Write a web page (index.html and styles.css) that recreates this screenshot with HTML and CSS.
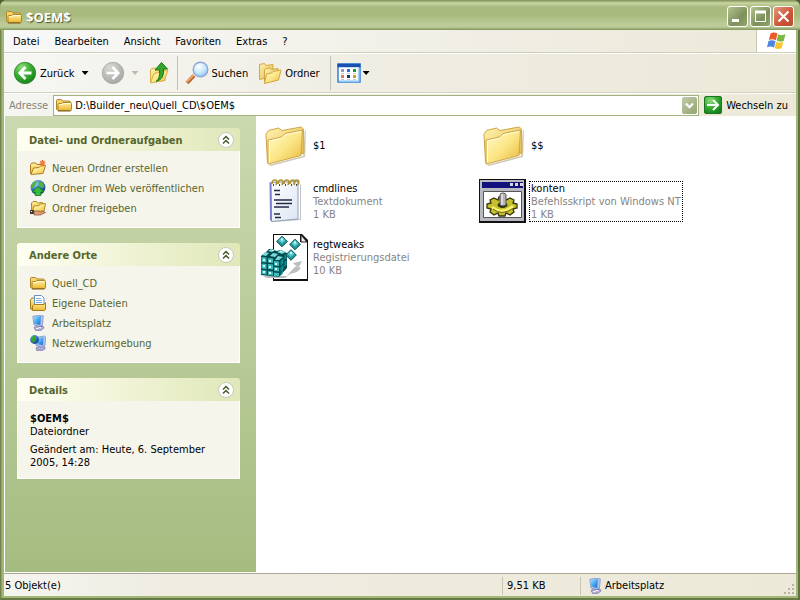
FILE: index.html
```html
<!DOCTYPE html>
<html lang="de">
<head>
<meta charset="utf-8">
<title>$OEM$</title>
<link rel="stylesheet" href="styles.css">
</head>
<body>
<svg class="defs" aria-hidden="true">
  <defs>
    <linearGradient id="yellow" x1="0" y1="0" x2="1" y2="1"><stop offset="0" stop-color="#fffac8"/><stop offset=".5" stop-color="#fce788"/><stop offset="1" stop-color="#e8b83c"/></linearGradient>
    <linearGradient id="yellow-back" x1="0" y1="0" x2="1" y2="1"><stop offset="0" stop-color="#fff3ae"/><stop offset="1" stop-color="#e3b546"/></linearGradient>
    <linearGradient id="gold" x1="0" y1="0" x2="0" y2="1"><stop offset="0" stop-color="#fff0a4"/><stop offset="1" stop-color="#edb62e"/></linearGradient>
    <radialGradient id="green" cx=".35" cy=".25" r=".8"><stop offset="0" stop-color="#8fdd7c"/><stop offset=".5" stop-color="#3bae32"/><stop offset="1" stop-color="#14801b"/></radialGradient>
    <radialGradient id="grey" cx=".35" cy=".25" r=".8"><stop offset="0" stop-color="#d8d8d4"/><stop offset="1" stop-color="#a5a5a1"/></radialGradient>
    <radialGradient id="lens" cx=".4" cy=".3" r=".75"><stop offset="0" stop-color="#fff"/><stop offset=".6" stop-color="#c3e6fc"/><stop offset="1" stop-color="#7fbdf0"/></radialGradient>
    <linearGradient id="screen" x1="0" y1="0" x2="1" y2="1"><stop offset="0" stop-color="#a8e4fc"/><stop offset=".5" stop-color="#4ba8f2"/><stop offset="1" stop-color="#1f63c8"/></linearGradient>
    <radialGradient id="globe" cx=".35" cy=".25" r=".8"><stop offset="0" stop-color="#9ad2ff"/><stop offset=".5" stop-color="#2f74cc"/><stop offset="1" stop-color="#123a85"/></radialGradient>
    <linearGradient id="paper" x1="0" y1="0" x2="1" y2="1"><stop offset="0" stop-color="#fff"/><stop offset="1" stop-color="#dce5f3"/></linearGradient>
    <symbol id="folder" viewBox="0 0 16 16">
      <path d="M.5 12V3.500Q.500 2.500 1.500 2.500h4L7 4h6q1.500 0 1.500 1.500V13H2Q.5 13 .5 12z" fill="#f6d468" stroke="#b0862a"/>
      <path d="M2 13.500V7.500q0-1 1-1h2.500L7 5.500h7.500q1 0 1 1V12.500q0 1-1 1z" fill="url(#gold)" stroke="#b0862a"/>
      <path d="M3 7.500h3l1.500-1H14" fill="none" stroke="#fffbd8"/>
      <path d="M2 14h12.500" stroke="#7c5c1c"/>
    </symbol>
    <symbol id="folder-big" viewBox="0 0 48 48">
      <path d="M8 44L43 35 45 9l1 1-1 26-34 9z" fill="#9b8960" opacity=".45"/>
      <path d="M7.500 41.500L6 13.500 8.500 9.500l10-2.500 3.500 2.500 19-3.500 2.500 2 .5 24z" fill="url(#yellow-back)" stroke="#cfa648"/>
      <path d="M8 43V19l13.500-3 3.500-3.500L42.500 9l-1.500 25.500z" fill="url(#yellow)" stroke="#cfa648"/>
      <path d="M9.500 41V20l12.500-2.800 3.500-3.500L41 10.500" fill="none" stroke="#fffde0"/>
    </symbol>
    <symbol id="computer" viewBox="0 0 16 16">
      <path d="M4 12.500l5-3 4 1.500 1 2-4 3H6z" fill="#a9a8d2" stroke="#7676a8" stroke-width=".7"/>
      <path d="M8 8l4 1v4l-4-1z" fill="#655f9c"/>
      <path d="M2.800 1.300L11 0l2.300 1L12.500 10 10 11.500 4 10z" fill="#b4c6ec" stroke="#7f94c6" stroke-width=".8"/>
      <path d="M3.500 2l7.500-1-.7 9-6-1.200z" fill="url(#screen)"/>
      <path d="M6 14l4-1.500 2 .5" stroke="#fff" fill="none"/>
    </symbol>
    <symbol id="chevrons" viewBox="0 0 16 16">
      <circle cx="8" cy="8" r="7.500" fill="#fff" stroke="#c5caba"/>
      <path d="M5 7.500l3-3 3 3M5 11.500l3-3 3 3" fill="none" stroke="#47582a" stroke-width="1.500"/>
    </symbol>
    <symbol id="gem" viewBox="0 0 12 12">
      <path d="M6 .7L11.300 6 6 11.300.7 6z" fill="#21979b" stroke="#0b4f55"/>
      <path d="M6 1.500L9.500 5 6 8 2.500 5z" fill="#5ccaca"/>
      <path d="M5 3h2v2H5z" fill="#c5ffff"/>
    </symbol>
  </defs>
</svg>

<div class="window">
  <header class="titlebar">
    <svg class="icon16"><use href="#folder"/></svg>
    <h1>$OEM$</h1>
    <div class="controls">
      <button class="control" aria-label="Minimieren"><svg viewBox="0 0 21 21"><path d="M5 14.500h7" stroke="#fff" stroke-width="3"/></svg></button>
      <button class="control" aria-label="Maximieren"><svg viewBox="0 0 21 21"><path d="M5.500 6v9.500h10V6" fill="none" stroke="#fff"/><path d="M5 6h11" stroke="#fff" stroke-width="3"/></svg></button>
      <button class="control close" aria-label="Schließen"><svg viewBox="0 0 21 21"><path d="M5.500 5.500l10 10m0-10l-10 10" stroke="#fff" stroke-width="2.200"/></svg></button>
    </div>
  </header>

  <div class="client">
    <nav class="menubar">
      <button>Datei</button><button>Bearbeiten</button><button>Ansicht</button><button>Favoriten</button><button>Extras</button><button>?</button>
      <div class="brand">
        <svg viewBox="0 0 20 18">
          <path d="M3.500 1.500q3-2 7 .1L8.900 8.200q-3.500-1.700-7-.2z" fill="#ec5a2b"/>
          <path d="M11.300 2.200q3.200 1.800 7.200.1L16.700 9q-3.500 1.500-7-.4z" fill="#79b93c"/>
          <path d="M1.500 9q3.300-1.500 7 .2L7 15.500q-3.500-2-7-.2z" fill="#4a86e0"/>
          <path d="M9.300 9.700q3.500 1.800 7 .3l-1.700 6.300q-3.700 1.600-7-.2z" fill="#f9c52d"/>
        </svg>
      </div>
    </nav>

    <div class="toolbar">
      <button class="tool">
        <svg class="icon24" viewBox="0 0 24 24"><circle cx="12" cy="12" r="10.700" fill="url(#green)" stroke="#2b8428" stroke-width=".8"/><path d="M12.500 6L6.800 12l5.700 6M7 12h11.500" fill="none" stroke="#fff" stroke-width="2.800"/></svg>
        <span>Zurück</span>
      </button>
      <button class="arrow" aria-label="Verlauf zurück"></button>
      <button class="tool forward" aria-label="Vorwärts" disabled>
        <svg class="icon24" viewBox="0 0 24 24"><circle cx="12" cy="12" r="10.700" fill="url(#grey)" stroke="#a6a6a0" stroke-width=".8"/><path d="M11.500 6l5.700 6-5.700 6M17 12H5.500" fill="none" stroke="#fff" stroke-width="2.600"/></svg>
      </button>
      <button class="arrow dim" aria-label="Verlauf vorwärts" disabled></button>
      <button class="tool up" aria-label="Aufwärts">
        <svg class="icon24" viewBox="0 0 24 24"><path d="M3.500 21.500V8.500l1.500-1 4-.5 1 1.500 8-1v12z" fill="url(#yellow-back)" stroke="#d8b04a"/><path d="M3.500 22L7 12.500l14-3.500-3.500 10.500z" fill="url(#yellow)" stroke="#d8b04a"/><path d="M9 20.500q4.500-3 3.500-11.500H8L14.500 1.500 20.500 8h-4q1 10.500-7.500 12.500z" fill="#35a52e" stroke="#167d18"/></svg>
      </button>
      <span class="divider"></span>
      <button class="tool search">
        <svg class="icon24" viewBox="0 0 24 24"><path d="M9 14.500l-7 7.500" stroke="#b5683a" stroke-width="4"/><path d="M8.500 14L1.500 21" stroke="#f0a468" stroke-width="2"/><circle cx="15.500" cy="8.500" r="7.300" fill="url(#lens)" stroke="#8fa9d4" stroke-width="1.400"/></svg>
        <span>Suchen</span>
      </button>
      <button class="tool folders">
        <svg class="icon24" viewBox="0 0 24 24"><path d="M1.500 18.500v-15l5-1L8 4.500l7-1v12z" fill="url(#yellow-back)" stroke="#d2a844"/><path d="M6.500 22V8.500L8 7.500l4-.5 1.500 1.500 6.500-1V19z" fill="url(#yellow-back)" stroke="#d2a844"/><path d="M6.500 22.500l2-9.500 5-1 1.500-1.500 8-1.500-2.500 10z" fill="url(#yellow)" stroke="#d2a844"/></svg>
        <span>Ordner</span>
      </button>
      <span class="divider wide"></span>
      <button class="tool views" aria-label="Ansichten">
        <svg class="icon24" viewBox="0 0 24 24"><rect x="1" y="3" width="22" height="18" fill="#fff" stroke="#2f82d8" stroke-width="1.500"/><path d="M.500 4.500h23" stroke="#1850b0" stroke-width="3.500"/><path d="M21.500 7v13H2" fill="none" stroke="#a9d2f8" stroke-width="1.500"/><path d="M4 8h3v3H4z" fill="#9b92c5"/><path d="M10 8h3v3h-3z" fill="#2674d8"/><path d="M16 8h3v3h-3z" fill="#1c9a25"/><path d="M4 14h3v3H4z" fill="#e8745a"/><path d="M10 14h3v3h-3z" fill="#17357d"/><path d="M16 14h3v3h-3z" fill="#d59c20"/><path d="M4 12.500h3m3 0h3m3 0h3M4 18.500h3m3 0h3m3 0h3" stroke="#c2cbd3"/></svg>
      </button>
      <button class="arrow near" aria-label="Ansicht wählen"></button>
    </div>

    <form class="address">
      <label for="path">Adresse</label>
      <div class="field">
        <svg class="icon16"><use href="#folder"/></svg>
        <input id="path" type="text" value="D:\Builder_neu\Quell_CD\$OEM$">
        <button type="button" class="drop" aria-label="Adressen anzeigen"><svg viewBox="0 0 15 17"><path d="M4 6.500l3.500 3.700L11 6.500" fill="none" stroke="#fff" stroke-width="2.200"/></svg></button>
      </div>
      <button type="button" class="go">
        <svg viewBox="0 0 18 18"><rect x=".5" y=".5" width="17" height="17" rx="1.500" fill="url(#green)" stroke="#197521"/><path d="M9 4l5 5-5 5M3 9h10.500" fill="none" stroke="#fff" stroke-width="2"/></svg>
        <span>Wechseln zu</span>
      </button>
    </form>

    <main class="content">
      <aside class="sidebar">
        <section class="panel">
          <header><h2>Datei- und Ordneraufgaben</h2><button aria-label="Reduzieren"><svg><use href="#chevrons"/></svg></button></header>
          <ul>
            <li><svg class="icon16" viewBox="0 0 16 16"><path d="M.5 13.500V4.500L2 3h4l1 1.500h5.500v8z" fill="url(#gold)" stroke="#b07c24"/><path d="M1 14.500L3.500 8l5.500-.5L10.500 6l5-.5-2.500 8z" fill="url(#yellow)" stroke="#b07c24"/><path d="M12.500 0v6M9.500 3h6M10.500 1l4 4m0-4l-4 4" stroke="#ed6a29" stroke-width="1.200"/><circle cx="12.500" cy="3" r="1.700" fill="#f5823a"/></svg><a href="#">Neuen Ordner erstellen</a></li>
            <li><svg class="icon16" viewBox="0 0 16 16"><circle cx="8" cy="7.500" r="7.400" fill="url(#globe)"/><path d="M2 4q2-3.500 5-3l-1 3-3 4-2 1zM9 1l4 2 1.500 4-3 1-3-3z" fill="#55b33d"/><path d="M8 6.500l6 5.500h-3.200v3.500H5.200V12H2z" fill="#37bc35" stroke="#147423" stroke-width=".8"/></svg><a href="#">Ordner im Web veröffentlichen</a></li>
            <li><svg class="icon16" viewBox="0 0 16 16"><path d="M1.500 10.500V3L3 1.500h3.500l1 1.500 5-.5v7z" fill="url(#gold)" stroke="#b28b27"/><path d="M2.500 11.500L4 6l5-.5L10 4l5.500-.5L14 11z" fill="url(#yellow)" stroke="#b28b27"/><path d="M0 10h4v4H0z" fill="#433b31"/><path d="M1 11h1v1H1z" fill="#fff"/><path d="M4 11h4l2 1 4-.5 1.500 1-5 2.500H4z" fill="#e4a279" stroke="#884c2d" stroke-width=".7"/></svg><a href="#">Ordner freigeben</a></li>
          </ul>
        </section>
        <section class="panel">
          <header><h2>Andere Orte</h2><button aria-label="Reduzieren"><svg><use href="#chevrons"/></svg></button></header>
          <ul>
            <li><svg class="icon16"><use href="#folder"/></svg><a href="#">Quell_CD</a></li>
            <li><svg class="icon16" viewBox="0 0 16 16"><path d="M.500 14V4.500L2 3h4v11.500H2z" fill="url(#gold)" stroke="#a97b1b"/><path d="M4.500.500h7L14 3V12H4.500z" fill="#fff" stroke="#668ec8"/><path d="M6 3.500h5M6 5.500h6M6 7.500h6" stroke="#7aabe2"/><path d="M2.500 15.500V11l1.500-1.500h10l1.500-2v7l-1 1z" fill="url(#gold)" stroke="#a97b1b"/></svg><a href="#">Eigene Dateien</a></li>
            <li><svg class="icon16"><use href="#computer"/></svg><a href="#">Arbeitsplatz</a></li>
            <li><svg class="icon16" viewBox="0 0 16 16"><path d="M6 13l4-2.500 5 1.500v2l-4 2H7z" fill="#a9a8d2" stroke="#7676a8" stroke-width=".7"/><path d="M5.500 2.500l9-1.500 1.200 1-.7 8.500-3 1.500-6-1.500z" fill="#b4c6ec" stroke="#7f94c6" stroke-width=".8"/><path d="M6.500 3.300l7-1-.5 8-5.800-1z" fill="url(#screen)"/><circle cx="4.500" cy="4.500" r="4.400" fill="url(#globe)"/><path d="M1 3l3-3 2 3-2 5-3-2z" fill="#35a52e"/></svg><a href="#">Netzwerkumgebung</a></li>
          </ul>
        </section>
        <section class="panel">
          <header><h2>Details</h2><button aria-label="Reduzieren"><svg><use href="#chevrons"/></svg></button></header>
          <div class="details">
            <p><b>$OEM$</b><br>Dateiordner</p>
            <p>Geändert am: Heute, 6. September 2005, 14:28</p>
          </div>
        </section>
      </aside>

      <div class="files">
        <div class="file"><svg class="icon48"><use href="#folder-big"/></svg><p>$1</p></div>
        <div class="file"><svg class="icon48"><use href="#folder-big"/></svg><p>$$</p></div>
        <div class="file">
          <svg class="icon48" viewBox="0 0 48 48"><path d="M12 44l28-2V7l1 1v35l-28 2z" fill="#9c9c9c" opacity=".6"/><path d="M10.500 5.500L38 4.500V42L11.500 44.500z" fill="url(#paper)" stroke="#8f9fba"/><path d="M10.500 5.500l.5 38" stroke="#7c80cc" stroke-width="2"/><path d="M14 13.500h6M15 17.500h5M14 23h18M16 26.500h16M14 30h15M14 37h6M15 40.500h6" stroke="#202b45" stroke-width="1.300"/><path d="M12 7q0-4 3-4t1 5M18 7q0-4 3-4t1 5M24 7q0-4 3-4t1 5M30 7q0-4 3-4t1 5M34 7q0-4 3-4t1 5" fill="none" stroke="#ae9337" stroke-width="1.700"/><path d="M13 8h1m5 0h1m5 0h1m5 0h1m4 0h1" stroke="#48444c" stroke-width="2"/></svg>
          <p>cmdlines<br><span>Textdokument<br>1 KB</span></p>
        </div>
        <div class="file focused">
          <svg class="icon48" viewBox="0 0 48 48"><path d="M1 2h47v44H1z" fill="#111"/><path d="M2 3h44v41H2z" fill="#b9b9c2"/><path d="M4 5h41v6H4z" fill="#12127c"/><path d="M32 6h3v3h-3zM37 6h3v3h-3zM42 6h3v3h-3z" fill="#d8d8d8"/><path d="M5.500 14.500h38v26h-38z" fill="#fff" stroke="#555"/><path d="M21 20h6l1 3 4-2 4 2-1 3 4 1v4l-4 1 1 3-4 3-4-2-1 3h-6l-1-3-4 2-4-3 1-3-4-1v-4l4-1-1-3 4-2 4 2z" fill="#c6c02f" stroke="#36340c" stroke-width="1.300"/><path d="M14 30q10 8 21-1" fill="none" stroke="#f7f26a" stroke-width="2.500"/><path d="M15 32q9 7 19 0" fill="none" stroke="#6f6b1c"/><ellipse cx="24.500" cy="28" rx="5" ry="3" fill="#33300c"/><path d="M22 18q0-2 3-2t3 2v10q-3 2-6 0z" fill="#b5b5b8" stroke="#555"/><path d="M24 17v11" stroke="#fff"/></svg>
          <p>konten<br><span>Befehlsskript von Windows NT<br>1 KB</span></p>
        </div>
        <div class="file">
          <svg class="icon48" viewBox="0 0 48 48">
            <path d="M13 1h29l7 7v40H13z" fill="#111"/><path d="M14 2h26v7h7v37H14z" fill="#fff"/><path d="M41 2v7h6z" fill="#eee" stroke="#222"/>
            <path d="M3 43h24l4-5 5-5 5 2-4 4-7 2-5 4H7zM33 30l9-2-3 6-4-2z" fill="#bdbdbd"/>
            <path d="M1 23l5-4 3-3h4l3 2 5-1 6 3v15l-8 9-18-2z" fill="#06494d"/>
            <path d="M2 22l3-3 4 1-3 3zM8 18l3-2 4 1-3 2zM10 23l3-3 5 1-3 3zM17 19l4-2 5 2-4 2zM15 27l3-4 5 1-4 3z" fill="#79dada"/>
            <path d="M1.500 24l5 .5v5l-5-.5zM8 25l5 .5v4.500l-5-.5zM14 28l5 .5v4.500l-5-.5zM1.500 30.500l5 .5v5l-5-.5zM8 31l5 .5v5L8 36zM14 34l5 .5v4l-5-.5zM1.500 37l5 .5v4l-5-.5zM8 38l5 .5v4L8 42zM14 39.500l5 .5v3.500l-5-.5z" fill="#3cbcbd"/>
            <path d="M20.500 28l3-2.500v4.500l-3 3zM24.500 22l2-1.500v4.500l-2 2zM20.500 34.500l3-3V36l-3 3zM24.500 29l2-2v5l-2 2zM20.500 40l2.500-3v3l-2.500 3z" fill="#108d91"/>
            <path d="M3 26h2v2H3zM9 27h2v2H9zM15 30h2v2h-2zM3 32h2v2H3zM9 33h2v2H9zM15 35h2v2h-2zM3 38h2v2H3zM9 39h2v2H9zM12 17h2v1h-2zM20 18h2v1h-2z" fill="#d4ffff"/>
            <use href="#gem" x="16" y="2" width="12" height="13"/><use href="#gem" x="29" y="5" width="12" height="13"/><use href="#gem" x="25" y="16" width="12" height="12"/>
          </svg>
          <p>regtweaks<br><span>Registrierungsdatei<br>10 KB</span></p>
        </div>
      </div>
    </main>

    <footer class="status">
      <span class="count">5 Objekt(e)</span>
      <span class="size">9,51 KB</span>
      <span class="zone"><svg class="icon16"><use href="#computer"/></svg>Arbeitsplatz</span>
      <svg class="grip" viewBox="0 0 12 12"><path d="M8 0h2v2H8zM4 4h2v2H4zM8 4h2v2H8zM0 8h2v2H0zM4 8h2v2H4zM8 8h2v2H8z" fill="#b9b5a0"/></svg>
    </footer>
  </div>
</div>
</body>
</html>
```
FILE: styles.css
```css
* {
  box-sizing: border-box;
}

body {
  margin: 0;
  background: #4e6034;
  color: #000;
  font: 11px/13px "DejaVu Sans Condensed", "Noto Sans", sans-serif;
}

h1, h2, p, ul {
  margin: 0;
  padding: 0;
}

button {
  margin: 0;
  padding: 0;
  border: 0;
  background: none;
  color: inherit;
  font: inherit;
}

svg {
  display: block;
  flex: none;
}

.defs {
  position: absolute;
  width: 0;
  height: 0;
}

.icon16 { width: 16px; height: 16px; }
.icon24 { width: 24px; height: 24px; }
.icon48 { width: 48px; height: 48px; }

.window {
  display: flex;
  flex-direction: column;
  min-height: 100vh;
  padding: 0 4px 4px;
  border-radius: 7px 7px 0 0;
  background: #a3b878;
  box-shadow: inset 1px 0 #71844c, inset -2px 0 #5f7343, inset 0 -2px #667a45, inset 2px 0 #8fa365;
}

.titlebar {
  display: flex;
  align-items: center;
  gap: 4px;
  height: 30px;
  margin: 0 -4px;
  padding: 3px 6px 0;
  border-radius: 7px 7px 0 0;
  background: linear-gradient(#7b8d55, #c9d6a1 3px, #a9ba80 7px, #a9ba7e 15px, #bac995 23px, #bdcc98 27px, #7f945a);
}

.titlebar h1 {
  flex: 1;
  color: #fff;
  font: bold 13px/16px "Open Sans", sans-serif;
  text-shadow: 1px 1px 1px #4c5c2d;
}

.controls {
  display: flex;
  gap: 2px;
}

.control {
  width: 21px;
  height: 21px;
  border: 1px solid #fff;
  border-radius: 3px;
  background: linear-gradient(135deg, #b5c392, #7d905b 60%, #92a56d);
}

.control svg {
  width: 21px;
  height: 21px;
  margin: -1px;
}

.control.close {
  background: linear-gradient(135deg, #e39a80, #cd5136 60%, #b94c30);
}

.client {
  display: flex;
  flex: 1;
  flex-direction: column;
  background: #eeebde;
}

.menubar {
  display: flex;
  align-items: center;
  gap: 15px;
  height: 23px;
  padding-left: 9px;
  border-bottom: 1px solid #d0cfbd;
  background: linear-gradient(90deg, #f8f8f8, #f0eee4 60%, #ece9d8);
}

.brand {
  display: grid;
  place-items: center;
  width: 40px;
  height: 22px;
  margin-left: auto;
  border-left: 1px solid #c9c6b3;
  background: #fff;
}

.brand svg {
  width: 20px;
  height: 18px;
}

.toolbar {
  display: flex;
  align-items: center;
  height: 40px;
  padding-left: 9px;
  border-top: 1px solid #fff;
  border-bottom: 1px solid #d3d0be;
  background: linear-gradient(90deg, #f6f6f3, #efede2 50%, #ece9d8);
}

.tool {
  display: flex;
  align-items: center;
  gap: 3px;
}

.arrow {
  width: 7px;
  height: 4px;
  margin-left: 7px;
  background: #000;
  clip-path: polygon(0 0, 100% 0, 50% 100%);
}

.arrow.dim {
  background: #bdbbb1;
}

.arrow.near {
  margin-left: 2px;
}

.forward { margin-left: 12px; }
.up { margin-left: 8px; }
.search { margin-left: 7px; }
.folders { margin-left: 10px; }
.views { margin-left: 6px; }

.divider {
  width: 1px;
  height: 34px;
  margin-left: 6px;
  background: #c3c1b2;
}

.divider.wide {
  margin-left: 10px;
}

.address {
  display: flex;
  align-items: center;
  gap: 5px;
  height: 23px;
  padding: 0 8px 0 5px;
  border-top: 1px solid #fff;
  background: linear-gradient(90deg, #f5f5f1, #efede2 50%, #ece9d8);
}

.address label {
  color: #858478;
}

.field {
  display: flex;
  flex: 1;
  align-items: center;
  gap: 3px;
  height: 21px;
  padding: 0 1px 0 2px;
  border: 1px solid #a4b27f;
  background: #fff;
}

.field input {
  flex: 1;
  min-width: 0;
  padding: 0;
  border: 0;
  outline: 0;
  background: none;
  font: inherit;
}

.drop {
  width: 15px;
  height: 17px;
  border-radius: 2px;
  background: linear-gradient(135deg, #c1cba5, #93a474);
}

.go {
  display: flex;
  align-items: center;
  gap: 4px;
}

.go svg {
  width: 18px;
  height: 18px;
}

.content {
  display: flex;
  flex: 1;
  border-bottom: 1px solid #fff;
  background: #fff;
}

.sidebar {
  display: flex;
  flex: none;
  flex-direction: column;
  gap: 15px;
  width: 252px;
  padding: 12px 16px 12px 12px;
  border-left: 1px solid #fff;
  background: linear-gradient(#ccd9b0, #a5bc80);
}

.panel header {
  display: flex;
  align-items: center;
  justify-content: space-between;
  height: 23px;
  padding: 0 6px 0 12px;
  border-radius: 3px 3px 0 0;
  background: linear-gradient(90deg, #fffff2, #e0e7b8);
}

.panel h2 {
  padding-top: 2px;
  color: #56662d;
  font-size: 11px;
}

.panel header svg {
  width: 16px;
  height: 16px;
}

.panel ul,
.details {
  border: 1px solid #fff;
  border-top: 0;
  background: #f6f5ec;
}

.panel ul {
  padding: 7px 12px 9px;
  list-style: none;
}

.panel li {
  display: flex;
  align-items: center;
  gap: 6px;
  height: 20px;
}

.panel a {
  color: #56662d;
  text-decoration: none;
}

.details {
  display: flex;
  flex-direction: column;
  gap: 5px;
  padding: 11px 24px 9px 12px;
}

.files {
  display: grid;
  flex: 1;
  grid-template-columns: 218px 218px;
  grid-auto-rows: 48px;
  align-content: start;
  row-gap: 8px;
  padding: 5px 4px;
}

.file {
  display: flex;
  align-items: center;
  gap: 4px;
  white-space: nowrap;
}

.file p {
  padding: 0 1px;
}

.file span {
  color: #858585;
}

.file.focused p {
  outline: 1px dotted #000;
}

.status {
  display: flex;
  align-items: center;
  height: 23px;
  padding-top: 1px;
  border-top: 1px solid #aaa796;
  background: linear-gradient(90deg, #f5f5f0, #efede2 20%, #ece9d8);
}

.status span {
  display: flex;
  align-items: center;
  gap: 2px;
  height: 18px;
}

.count {
  flex: 1;
  padding-left: 1px;
}

.size {
  width: 78px;
  padding-left: 4px;
  border-left: 1px solid #c8c5b3;
}

.zone {
  width: 204px;
  padding-left: 6px;
  border-left: 1px solid #c8c5b3;
}

.grip {
  align-self: flex-end;
  width: 12px;
  height: 12px;
}
```
